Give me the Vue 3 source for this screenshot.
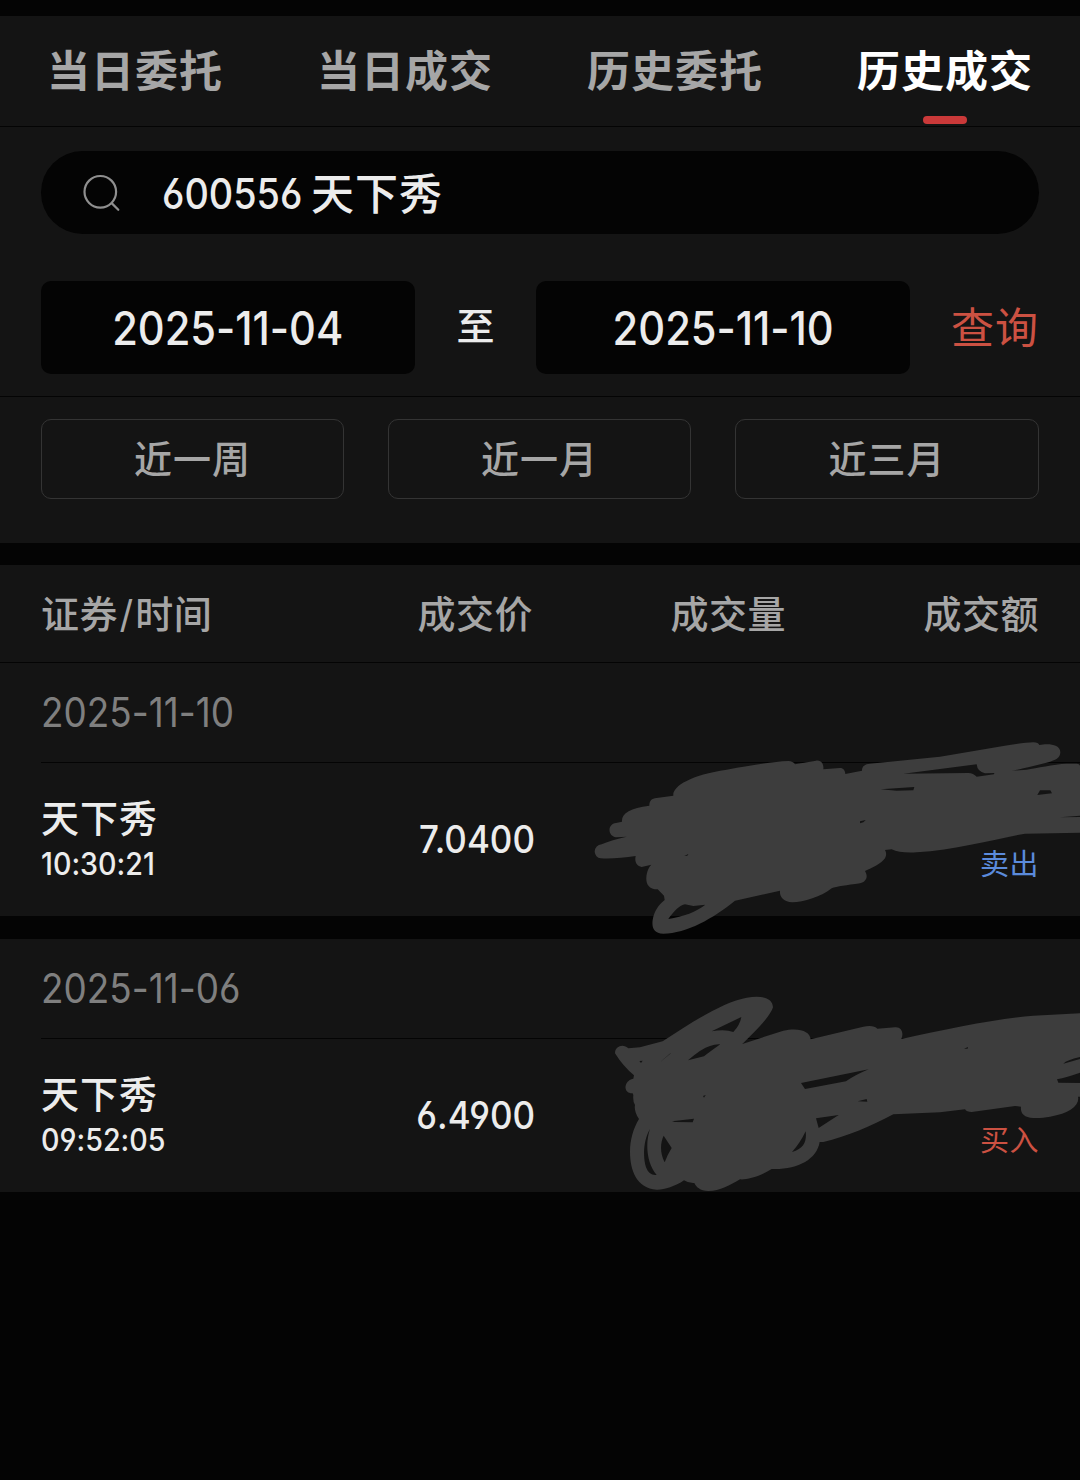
<script setup>
const tabs = ['当日委托', '当日成交', '历史委托', '历史成交']
const ranges = ['近一周', '近一月', '近三月']
const groups = [
  { date: '2025-11-10', name: '天下秀', time: '10:30:21', price: '7.0400', side: '卖出', kind: 'sell' },
  { date: '2025-11-06', name: '天下秀', time: '09:52:05', price: '6.4900', side: '买入', kind: 'buy' },
]
</script>

<template>
  <div class="page">
    <nav class="tabs">
      <div v-for="(t, i) in tabs" :key="t" class="tab" :class="{ active: i === 3 }">
        <span>{{ t }}</span>
      </div>
    </nav>

    <section class="filters">
      <div class="search">
        <svg class="glass" width="40" height="40" viewBox="0 0 40 40" fill="none" stroke="#8f8f8f" stroke-width="2.2" stroke-linecap="round">
          <circle cx="19.3" cy="18.8" r="15.8" />
          <path d="M30.9 30.4 L37.3 36.8" />
        </svg>
        <span class="code">600556</span><span class="stock">天下秀</span>
      </div>
      <div class="dates">
        <div class="date-box"><span>2025-11-04</span></div>
        <div class="to">至</div>
        <div class="date-box"><span>2025-11-10</span></div>
        <div class="query">查询</div>
      </div>
    </section>

    <section class="ranges">
      <div v-for="r in ranges" :key="r" class="range">{{ r }}</div>
    </section>

    <section class="thead">
      <span class="c1">证券<i>/</i>时间</span>
      <span class="c2">成交价</span>
      <span class="c3">成交量</span>
      <span class="c4">成交额</span>
    </section>

    <section v-for="g in groups" :key="g.date" class="group" :class="g.kind">
      <div class="gdate"><span>{{ g.date }}</span></div>
      <div class="row">
        <div class="who">
          <div class="name">{{ g.name }}</div>
          <div class="time"><span>{{ g.time }}</span></div>
        </div>
        <div class="price"><span>{{ g.price }}</span></div>
        <div class="side">{{ g.side }}</div>
      </div>
      <svg v-if="g.kind === 'sell'" class="scribble" width="500" height="220" viewBox="0 0 1500 660">
        <path
          fill-rule="evenodd"
          d="M44 365Q46 345 65 343Q95 330 140 320L108 322C82 318 82 282 108 279L126 275C124 250 150 235 208 227C208 212 215 205 230 204L280 197C276 170 330 135 440 119C520 105 580 95 625 93Q640 94 645 103L708 92C724 90 732 102 730 118L780 114C790 114 796 122 796 132L846 122C846 108 855 102 870 101L1080 80L1270 48Q1330 38 1360 37Q1376 38 1378 45C1400 40 1441 40 1441 67C1441 85 1425 90 1405 97L1360 108C1330 115 1310 120 1295 122L1340 119C1370 115 1420 102 1460 101L1490 101Q1500 102 1500 108L1500 308L1335 311C1250 325 1130 360 1010 367Q960 370 935 358L915 360Q922 372 915 385C905 400 875 415 855 423C865 440 860 455 840 460C800 465 770 470 755 475C725 500 670 517 637 517C610 515 598 500 600 482L465 512C400 565 320 610 250 611C220 611 215 590 218 570C222 545 235 525 254 510L252 497L233 478C205 478 198 460 199 443C200 425 207 410 214 404L185 411C170 408 163 395 167 378C130 384 90 387 62 385Q46 382 44 365Z
          M970 131L1190 103Q1192 125 1215 130L1243 129L1242 133L1190 140Q1180 130 1165 129Z
          M265 567C280 545 300 525 315 523L340 528L376 524C350 545 310 560 265 567Z
          M902 178L1003 171L1000 181L950 182Z
          M1380 181L1411 181L1416 190L1372 195Z
          M840 274L857 270L850 277L840 280Z
          M1440 262L1500 257L1500 261Z
          M313 378L325 372L322 377Z"
        />
      </svg>
      <svg v-else class="scribble" width="480" height="220" viewBox="0 0 1440 660">
        <path
          fill-rule="evenodd"
          d="M45 220C45 198 70 190 85 205L120 202L188 184C270 130 370 65 440 53C490 45 518 55 519 82C510 110 470 150 427 192L550 152C600 142 630 155 632 178L790 140C810 136 825 138 832 146L885 142C905 140 912 160 904 177C1050 145 1180 118 1300 107L1440 100L1440 231Q1400 240 1390 251L1440 237L1440 278Q1400 292 1371 298L1375 308L1440 309L1440 350L1434 350C1440 375 1410 400 1350 410C1310 417 1258 420 1263 380L1245 378L1115 396Q1100 396 1095 388L1020 397L880 403C810 440 740 470 670 486L659 486C650 540 590 570 515 567C480 590 440 600 420 598C390 615 360 633 325 633C300 633 288 620 283 609Q265 610 252 601C225 620 190 630 170 629C110 625 90 570 90 515C90 480 100 445 117 417C105 400 103 385 105 375Q98 365 100 345L98 340C78 340 75 325 77 317C80 305 90 297 100 296L102 286Q70 260 45 220Z
          M335 154L424 111Q420 135 400 156Q375 146 335 154Z
          M264 241Q305 205 330 198Q345 192 361 193Q330 215 312 229Z
          M150 447C130 480 128 530 138 562Q148 588 170 585C140 550 135 490 150 447Z
          M191 467L215 504Q203 523 194 547C180 520 180 490 191 467Z
          M216 424L282 416L278 427L225 426Z
          M617 454C620 480 615 505 576 516Q600 490 617 454Z
          M603 309L806 268Q765 285 738 304L615 327Z
          M648 415L716 405L656 444Z
          M773 364L800 357L802 365Z
          M118 243L128 242L123 249Z
          M178 248L212 219L211 221Z
          M309 348L317 345L312 353Z
          M1092 206L1104 201L1103 206Z"
        />
      </svg>
    </section>
  </div>
</template>

<style>
html,
body {
  margin: 0;
  background: #040404;
}
</style>

<style scoped>
.page {
  width: 1080px;
  height: 1480px;
  box-sizing: border-box;
  padding-top: 16px;
  overflow: hidden;
  background: #040404;
  color: #ececec;
  font-family: Inter, 'Noto Sans CJK SC', sans-serif;
  font-feature-settings: 'cv03', 'cv04', 'calt' 0;
  font-weight: 500;
  white-space: nowrap;
}
.tabs {
  display: flex;
  height: 110px;
  background: #141414;
  border-bottom: 1px solid #040404;
}
.tab {
  flex: 1;
  display: flex;
  justify-content: center;
  position: relative;
  font: 700 43px/104px 'Noto Sans CJK SC', sans-serif;
  letter-spacing: 1px;
  color: #a6a6a6;
}
.tab.active {
  color: #fff;
}
.tab.active::after {
  content: '';
  position: absolute;
  left: 113px;
  bottom: 2px;
  width: 44px;
  height: 8px;
  border-radius: 4px;
  background: #ca3939;
}
.filters {
  height: 269px;
  box-sizing: border-box;
  padding: 24px 41px 0;
  background: #141414;
}
.search {
  display: flex;
  align-items: center;
  height: 83px;
  padding-left: 40px;
  border-radius: 42px;
  background: #040404;
}
.glass {
  width: 40px;
  margin-right: 41px;
}
.code,
.date-box span,
.gdate span,
.time span,
.price span {
  display: inline-block;
  transform: scaleX(0.9);
}
.code {
  width: 149px;
  transform-origin: left;
  font-size: 42px;
  line-height: 83px;
  padding-top: 1px;
}
.stock {
  font-size: 43px;
  line-height: 78px;
  letter-spacing: 1px;
  padding-top: 2px;
}
.dates {
  display: flex;
  align-items: center;
  margin-top: 47px;
}
.date-box {
  display: flex;
  align-items: center;
  justify-content: center;
  width: 374px;
  height: 93px;
  border-radius: 10px;
  background: #040404;
  font-size: 46px;
}
.date-box span {
  transform: scaleX(0.905);
}
.to {
  width: 121px;
  padding-bottom: 8px;
  text-align: center;
  font-size: 38px;
}
.query {
  margin-left: 41px;
  padding-bottom: 6px;
  font-size: 43px;
  letter-spacing: 1px;
  color: #cc5142;
  font-weight: 400;
}
.ranges {
  display: flex;
  gap: 44px;
  height: 147px;
  box-sizing: border-box;
  padding: 22px 41px 44px;
  border-top: 1px solid #040404;
  background: #141414;
}
.range {
  width: 303px;
  box-sizing: border-box;
  border: 1px solid #343434;
  border-radius: 10px;
  text-align: center;
  font-size: 38px;
  line-height: 78px;
  letter-spacing: 1px;
  color: #a6a6a6;
}
.range:last-child {
  width: 304px;
}
.thead {
  display: flex;
  height: 97px;
  margin-top: 22px;
  padding: 0 41px;
  border-bottom: 1px solid #040404;
  background: #141414;
  font-size: 38px;
  line-height: 98px;
  letter-spacing: 0.5px;
  color: #a6a6a6;
}
.thead i {
  margin: 0 1.5px;
  font-style: normal;
  font-weight: 400;
}
.c1 {
  width: 241px;
}
.c2,
.c3,
.c4 {
  flex: none;
  width: 253px;
  text-align: right;
}
.group {
  position: relative;
  background: #141414;
  height: 253px;
}
.group + .group {
  margin-top: 23px;
}
.gdate {
  height: 99px;
  margin-left: 41px;
  border-bottom: 1px solid #040404;
  font-size: 41px;
  line-height: 99px;
  font-weight: 400;
  color: #7f7f7f;
}
.gdate span,
.time span {
  transform-origin: left;
}
.row {
  display: flex;
  height: 153px;
  padding: 0 41px;
}
.who {
  width: 240px;
  padding-top: 35px;
}
.name {
  font-size: 38px;
  line-height: 41px;
  letter-spacing: 1px;
}
.time {
  margin-top: 5px;
  font-size: 31px;
  line-height: 39px;
}
.time span {
  transform: scaleX(0.925);
}
.price {
  width: 254px;
  text-align: right;
  font-size: 38px;
  line-height: 152px;
}
.price span {
  transform: scaleX(0.92);
  transform-origin: right;
}
.side {
  flex: 1;
  padding-top: 81px;
  text-align: right;
  font-size: 29px;
  line-height: 42px;
  font-weight: 400;
  letter-spacing: 0.5px;
}
.sell .side {
  color: #5b8bdc;
}
.buy .side {
  color: #cc5142;
}
.scribble {
  position: absolute;
  fill: #3d3d3d;
}
.sell .scribble {
  left: 580px;
  top: 67px;
}
.buy .scribble {
  left: 600px;
  top: 41px;
}
</style>
